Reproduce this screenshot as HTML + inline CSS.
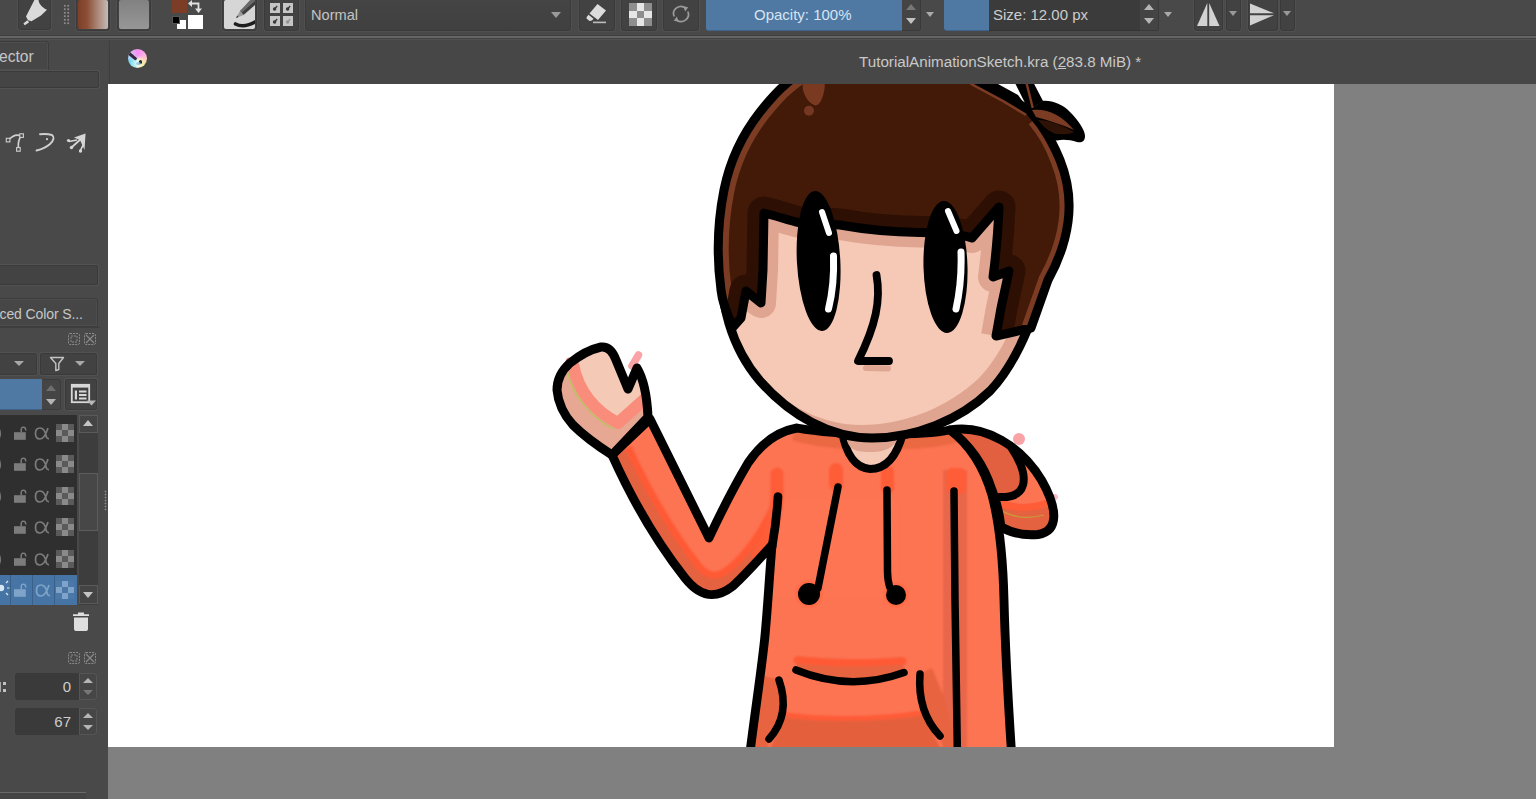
<!DOCTYPE html>
<html>
<head>
<meta charset="utf-8">
<title>Krita</title>
<style>
*{box-sizing:border-box;margin:0;padding:0}
html,body{width:1536px;height:799px;overflow:hidden;background:#808080;font-family:"Liberation Sans",sans-serif;}
body{position:relative}
.abs{position:absolute}
#topbar{left:0;top:0;width:1536px;height:37px;background:#494949}
#topline1{left:0;top:35px;width:1536px;height:1px;background:#3f3f3f}
#topline2{left:0;top:36px;width:1536px;height:2px;background:#646464}
#tabbar{left:0;top:39px;width:1536px;height:45px;background:#474747}
#leftpanel{left:0;top:39px;width:108px;height:760px;background:#494949}
#canvas{left:108px;top:84px;width:1226px;height:663px;background:#fff;overflow:hidden}
.btn{position:absolute;top:-2px;height:32px;background:#424242;border:1px solid #3a3a3a;border-radius:3px;box-shadow:0 0 0 1px #505050}
.txt{position:absolute;white-space:nowrap;color:#cfcfcf;font-size:15px;line-height:18px}
.tri-d{position:absolute;width:0;height:0;border-left:5px solid transparent;border-right:5px solid transparent;border-top:6px solid #b8b8b8}
.tri-u{position:absolute;width:0;height:0;border-left:5px solid transparent;border-right:5px solid transparent;border-bottom:6px solid #b8b8b8}
.field{position:absolute;background:#424242;border:1px solid #3a3a3a;border-radius:2px;box-shadow:0 0 0 1px #525252}
</style>
</head>
<body>
<!-- TOP TOOLBAR -->
<div id="topbar" class="abs">
<!-- brush tool button -->
<div class="btn" style="left:18px;width:33px;top:-3px;height:33px"></div>
<svg class="abs" style="left:22px;top:0" width="28" height="28" viewBox="0 0 28 28">
 <path d="M12.4,0 L16.5,0 C17,4 20,7.5 25,9.8 L19,15.5 L9.5,21.2 L6,20.3 L4,16.5 Z" fill="#dadada"/>
 <path d="M5.3,20.3 L7.2,22.3 L2.8,25.2 L1.4,23.6 Z" fill="#dadada"/>
</svg>
<!-- dotted handle -->
<div class="abs" style="left:63px;top:4px;width:7px;height:21px;background-image:radial-gradient(circle,#8e8e8e 0.9px,transparent 1.25px);background-size:3.5px 3.5px"></div>
<!-- gradient button -->
<div class="btn" style="left:76px;width:34px;top:-3px;height:34px"></div>
<div class="abs" style="left:78px;top:0;width:30px;height:29px;border-radius:2px;background:linear-gradient(90deg,#7d3f28 0%,#8c4e35 30%,#a98271 62%,#c4bab6 100%)"></div>
<!-- pattern button -->
<div class="btn" style="left:117px;width:34px;top:-3px;height:34px"></div>
<div class="abs" style="left:119px;top:0;width:30px;height:29px;border-radius:2px;background:linear-gradient(180deg,#818181,#979797)"></div>
<!-- fg/bg colours -->
<div class="abs" style="left:172px;top:0;width:15px;height:13px;background:#7c3d26"></div>
<div class="abs" style="left:188px;top:15px;width:15px;height:14px;background:#fff"></div>
<div class="abs" style="left:177px;top:20px;width:9px;height:9px;background:#fff"></div>
<div class="abs" style="left:172px;top:16px;width:8px;height:8px;background:#000;border:1px solid #555"></div>
<svg class="abs" style="left:188px;top:0" width="15" height="13" viewBox="0 0 15 13">
 <path d="M3,3.5 H10.5 V10" fill="none" stroke="#e0e0e0" stroke-width="1.8"/>
 <path d="M0,3.5 L4,0 V7 Z M10.5,13 L7,8.5 H14 Z" fill="#e0e0e0"/>
</svg>
<!-- brush preset -->
<div class="btn" style="left:222px;width:35px;top:-3px;height:34px"></div>
<div class="abs" style="left:224px;top:0;width:31px;height:29px;border-radius:2px;background:#d6d6d6;overflow:hidden">
 <svg width="31" height="29" viewBox="0 0 31 29">
  <path d="M31,-2 L16,11 L19.5,15 L31,5 Z" fill="#3e3e3e"/>
  <path d="M28,-2 L31,-2 L31,1 L18,12.5 L16,11 Z" fill="#6a6a6a"/>
  <path d="M16,11 L12,18 L19.5,15 Z" fill="#9a9a9a"/>
  <path d="M13.3,15.6 L12,18 L14.5,17 Z" fill="#333"/>
  <path d="M11.5,24 Q20,28.5 32,21.5" fill="none" stroke="#1e1e1e" stroke-width="3.6" stroke-linecap="round"/>
 </svg>
</div>
<!-- grid button -->
<div class="btn" style="left:264px;width:35px;top:-3px;height:34px"></div>
<svg class="abs" style="left:269px;top:2px" width="26" height="26" viewBox="0 0 26 26">
 <g fill="#c6c6c6"><rect x="1" y="1" width="10" height="10"/><rect x="14" y="1" width="10" height="10"/><rect x="1" y="14" width="10" height="10"/><rect x="14" y="14" width="10" height="10"/></g>
 <g fill="#3a3a3a" stroke="#3a3a3a" stroke-width="1.3"><circle cx="5.6" cy="7" r="1.1"/><path d="M5.6,7 L8.2,4"/><circle cx="18.6" cy="7" r="1.1"/><path d="M18.6,7 L21.2,4"/><circle cx="5.6" cy="20" r="1.1"/><path d="M5.6,20 L8.2,17"/><g opacity=".35"><circle cx="18.6" cy="20" r="1.1"/><path d="M18.6,20 L21.2,17"/></g></g>
</svg>
<!-- blend combobox -->
<div class="btn" style="left:305px;width:266px;top:-3px;height:34px;background:linear-gradient(180deg,#454545,#404040)"></div>
<div class="txt" style="left:311px;top:6px;font-size:14.6px;color:#c4c4c4">Normal</div>
<div class="tri-d" style="left:551px;top:12px;border-top-color:#9a9a9a"></div>
<!-- eraser -->
<div class="btn" style="left:579px;width:36px;top:-3px;height:34px"></div>
<svg class="abs" style="left:585px;top:2px" width="26" height="24" viewBox="0 0 26 24">
 <path d="M12.5,2 L21,8.5 L13,18 L4.5,11.5 Z" fill="#dcdcdc"/>
 <path d="M3.5,12.8 L8.5,16.8 L7,18.6 L4.5,19 L1.5,16.6 L1.7,15 Z" fill="#dcdcdc"/>
 <rect x="8" y="19.6" width="13" height="1.6" fill="#bdbdbd"/>
</svg>
<!-- checker -->
<div class="btn" style="left:621px;width:36px;top:-3px;height:34px"></div>
<svg class="abs" style="left:629px;top:3px" width="23" height="23" viewBox="0 0 3 3" shape-rendering="crispEdges">
 <rect width="3" height="3" fill="#8e8e8e"/>
 <rect x="1" y="0" width="1" height="1" fill="#e6e6e6"/><rect x="0" y="1" width="1" height="1" fill="#e6e6e6"/><rect x="2" y="1" width="1" height="1" fill="#e6e6e6"/><rect x="1" y="2" width="1" height="1" fill="#e6e6e6"/>
</svg>
<!-- reload -->
<div class="btn" style="left:663px;width:36px;top:-3px;height:34px"></div>
<svg class="abs" style="left:671px;top:4px" width="20" height="20" viewBox="0 0 20 20">
 <path d="M3.2,12.5 A7.2,7.2 0 0 1 14.5,4.2" fill="none" stroke="#9b9b9b" stroke-width="1.7"/>
 <path d="M16.8,7.5 A7.2,7.2 0 0 1 5.5,15.8" fill="none" stroke="#9b9b9b" stroke-width="1.7"/>
 <path d="M12.2,2.2 L17.2,3.2 L14.2,7.4 Z" fill="#9b9b9b"/>
 <path d="M7.8,17.8 L2.8,16.8 L5.8,12.6 Z" fill="#9b9b9b"/>
</svg>
<!-- opacity slider -->
<div class="abs" style="left:706px;top:-2px;width:196px;height:33px;background:#4f78a3;border-radius:3px 0 0 3px;border-bottom:1px solid #3f6288"></div>
<div class="txt" style="left:754px;top:6px;color:#d6e4f2">Opacity: 100%</div>
<div class="abs" style="left:902px;top:-2px;width:19px;height:33px;background:#444;border:1px solid #3a3a3a;border-left:none;border-radius:0 3px 3px 0"></div>
<div class="tri-u" style="left:906px;top:4px;border-bottom-color:#777"></div>
<div class="tri-d" style="left:906px;top:18px;border-top-color:#c2c2c2"></div>
<div class="tri-d" style="left:926px;top:12px;border-width:4px 4px 0 4px;border-top-color:#aaa;border-left-width:4px;border-right-width:4px;border-top-width:5px"></div>
<!-- size slider -->
<div class="abs" style="left:944px;top:-2px;width:196px;height:33px;background:#3b3b3b;border-radius:3px 0 0 3px;border-bottom:1px solid #333"></div>
<div class="abs" style="left:944px;top:-2px;width:45px;height:33px;background:#4f78a3;border-radius:3px 0 0 3px;border-bottom:1px solid #3f6288"></div>
<div class="txt" style="left:993px;top:6px;color:#cdcdcd">Size: 12.00 px</div>
<div class="abs" style="left:1140px;top:-2px;width:19px;height:33px;background:#444;border:1px solid #3a3a3a;border-left:none;border-radius:0 3px 3px 0"></div>
<div class="tri-u" style="left:1144px;top:4px;border-bottom-color:#b5b5b5"></div>
<div class="tri-d" style="left:1144px;top:18px;border-top-color:#b5b5b5"></div>
<div class="tri-d" style="left:1164px;top:12px;border-left-width:4px;border-right-width:4px;border-top-width:5px;border-top-color:#aaa"></div>
<!-- mirror H -->
<div class="btn" style="left:1194px;width:29px;top:-3px;height:34px"></div>
<svg class="abs" style="left:1196px;top:2px" width="25" height="25" viewBox="0 0 25 25">
 <path d="M11.3,1 V24 H1 Z" fill="#d2d2d2"/><path d="M13.2,1 V24 H23.5 Z" fill="#d2d2d2"/>
</svg>
<div class="btn" style="left:1226px;width:15px;top:-3px;height:34px"></div>
<div class="tri-d" style="left:1229px;top:11px;border-left-width:4.5px;border-right-width:4.5px;border-top-width:5px;border-top-color:#999"></div>
<!-- mirror V -->
<div class="btn" style="left:1248px;width:30px;top:-3px;height:34px"></div>
<svg class="abs" style="left:1250px;top:2px" width="25" height="25" viewBox="0 0 25 25">
 <path d="M0,1.5 H0 L24,11.2 H0 Z" fill="#d2d2d2"/><path d="M0,13.2 H24 L0,23.5 Z" fill="#d2d2d2"/>
</svg>
<div class="btn" style="left:1280px;width:15px;top:-3px;height:34px"></div>
<div class="tri-d" style="left:1283px;top:11px;border-left-width:4.5px;border-right-width:4.5px;border-top-width:5px;border-top-color:#999"></div>

</div>
<div id="topline1" class="abs"></div>
<div id="topline2" class="abs"></div>
<div class="abs" style="left:0;top:38px;width:1536px;height:1px;background:#424242;z-index:3"></div><div class="abs" style="left:0;top:39px;width:1536px;height:1px;background:#515151;z-index:3"></div>
<!-- TAB BAR -->
<div id="tabbar" class="abs">
<!-- coordinates relative to tabbar top (39px) -->
<div class="abs" style="left:109px;top:2px;width:1px;height:43px;background:#3e3e3e"></div>
<!-- krita icon -->
<div class="abs" style="left:127.5px;top:10.3px;width:19px;height:19px;border-radius:50%;overflow:hidden;background:radial-gradient(circle at 50% 72%,rgba(255,255,255,0.75) 0,rgba(255,255,255,0) 45%),conic-gradient(from 0deg at 50% 50%,#fb8cf6 0deg,#fba6ea 50deg,#fbd0c0 95deg,#f4e68e 135deg,#e6f2c4 175deg,#86e2ee 205deg,#72dcf0 245deg,#b4d0f6 285deg,#e9a4f4 335deg,#fb8cf6 360deg)">
 <div class="abs" style="left:0.5px;top:1.3px;width:11px;height:3.2px;background:#3a2540;border-radius:1.5px;transform:rotate(40deg);transform-origin:0 50%"></div>
 <div class="abs" style="left:11.3px;top:11.2px;width:3.6px;height:3.8px;background:#1d2a33;border-radius:50%"></div>
 <div class="abs" style="left:8.5px;top:12.5px;width:5px;height:3px;background:#7fb4e0;border-radius:50%;opacity:.7"></div>
</div>
<div class="txt" style="left:859px;top:14px;font-size:15.2px;color:#c9c9c9" id="title">TutorialAnimationSketch.kra (<span style="text-decoration:underline">2</span>83.8 MiB) *</div>

</div>
<!-- LEFT PANEL -->
<div id="leftpanel" class="abs">
<!-- coordinates relative to left panel top (39px) : y_rel = y_abs-39 -->
<!-- "ector" tab -->
<div class="abs" style="left:-4px;top:2px;width:53px;height:30px;background:#464646;border:1px solid #3c3c3c;border-radius:3px 3px 0 0;box-shadow:inset 0 0 0 1px #4e4e4e"></div>
<div class="txt" style="left:-1px;top:8.5px;font-size:15.6px;color:#c6c6c6">ector</div>
<div class="field" style="left:-4px;top:32px;width:103px;height:17px;background:#454545"></div>
<!-- tool icons y=142 -> rel 103 -->
<svg class="abs" style="left:4px;top:92px" width="24" height="24" viewBox="0 0 24 24">
 <path d="M4.5,9 Q11,2 17,5 M17,5 Q13.5,10 14.5,18" fill="none" stroke="#cfcfcf" stroke-width="1.7"/>
 <rect x="2.3" y="7.3" width="3.6" height="3.6" fill="#494949" stroke="#cfcfcf" stroke-width="1.1"/>
 <rect x="15.8" y="2.8" width="3.6" height="3.6" fill="#494949" stroke="#cfcfcf" stroke-width="1.1"/>
 <rect x="12.6" y="16.6" width="3.6" height="3.6" fill="#494949" stroke="#cfcfcf" stroke-width="1.1"/>
</svg>
<svg class="abs" style="left:34px;top:92px" width="24" height="24" viewBox="0 0 24 24">
 <path d="M6,3.2 Q13,2.5 18,4 Q22,7 16,13 Q11,17.5 2.5,19.5" fill="none" stroke="#cfcfcf" stroke-width="1.9" stroke-linecap="round"/>
 <circle cx="13" cy="8.2" r="1.1" fill="#cfcfcf"/>
</svg>
<svg class="abs" style="left:65px;top:92px" width="24" height="24" viewBox="0 0 24 24">
 <path d="M20.5,2.5 L9,6.5 L17,10 Z" fill="#d6d6d6"/>
 <path d="M20.5,2.5 L19.5,19 L15,9 Z" fill="#d6d6d6"/>
 <path d="M17,7 L6.5,16.5 M12,9 L4,10.5 M18.5,13 L15,20.5" fill="none" stroke="#d6d6d6" stroke-width="1.7"/>
 <circle cx="3.5" cy="9.5" r="1.6" fill="#d6d6d6"/><circle cx="6.5" cy="16.5" r="1.7" fill="#d6d6d6"/><circle cx="15.5" cy="20" r="1.7" fill="#d6d6d6"/>
</svg>
<!-- bar y 264-285 -->
<div class="field" style="left:-4px;top:226px;width:102px;height:20px;background:#434343"></div>
<!-- "ced Color S..." tab y 298-326 -->
<div class="abs" style="left:-4px;top:259px;width:102px;height:29px;background:#464646;border:1px solid #3c3c3c;border-radius:3px 3px 0 0;box-shadow:inset 0 0 0 1px #4d4d4d"></div>
<div class="txt" style="left:-0.5px;top:266px;font-size:14px;color:#c6c6c6;letter-spacing:-0.1px">ced Color S...</div>
<div class="abs" style="left:0;top:288px;width:100px;height:1px;background:#3e3e3e"></div>
<!-- float/close icons at y=339 -->
<svg class="abs" style="left:67px;top:293px" width="32" height="14" viewBox="0 0 32 14">
 <g fill="none" stroke="#8a8a8a" stroke-width="1" stroke-dasharray="2 1">
  <rect x="1.5" y="1.5" width="11" height="11" rx="1.5"/><rect x="4" y="4" width="6" height="6"/>
  <rect x="17.5" y="1.5" width="11" height="11" rx="1.5"/>
 </g>
 <path d="M19,3 L27,11 M27,3 L19,11" stroke="#8a8a8a" stroke-width="1.1" fill="none"/>
</svg>
<!-- dropdown row y 353-375 -->
<div class="field" style="left:-4px;top:314px;width:41px;height:22px"></div>
<div class="tri-d" style="left:14px;top:322px;border-top-color:#a8a8a8;border-top-width:5px"></div>
<div class="field" style="left:40px;top:314px;width:57px;height:22px"></div>
<svg class="abs" style="left:49px;top:317px" width="16" height="16" viewBox="0 0 16 16">
 <path d="M1.5,1.5 H14.5 L9.8,7.5 V13.5 L6.8,14.5 V7.5 Z" fill="none" stroke="#c4c4c4" stroke-width="1.4" stroke-linejoin="round"/>
</svg>
<div class="tri-d" style="left:75px;top:322px;border-top-color:#a8a8a8;border-top-width:5px"></div>
<!-- blue slider y 379-410 -->
<div class="abs" style="left:0;top:340px;width:42px;height:31px;background:#4f78a3;border-bottom:1px solid #3f6288"></div>
<div class="abs" style="left:42px;top:340px;width:19px;height:31px;background:#454545;border:1px solid #3b3b3b;border-left:none;border-radius:0 3px 3px 0"></div>
<div class="tri-u" style="left:46px;top:346px;border-bottom-color:#6e6e6e"></div>
<div class="tri-d" style="left:46px;top:360px;border-top-color:#b5b5b5"></div>
<div class="field" style="left:65px;top:340px;width:32px;height:31px"></div>
<svg class="abs" style="left:70px;top:344px" width="27" height="24" viewBox="0 0 27 24">
 <rect x="1.8" y="1.8" width="17.4" height="17.4" fill="none" stroke="#d8d8d8" stroke-width="1.8"/>
 <rect x="1" y="1" width="19" height="3.6" fill="#d8d8d8"/>
 <rect x="4.8" y="7.5" width="2.2" height="9" fill="#d8d8d8"/>
 <rect x="9" y="7.5" width="7.5" height="2" fill="#d8d8d8"/><rect x="9" y="11" width="7.5" height="2" fill="#d8d8d8"/><rect x="9" y="14.5" width="7.5" height="2" fill="#d8d8d8"/>
 <path d="M17,17.5 H26 L21.5,22.5 Z" fill="#b8b8b8"/>
</svg>
<!-- layer list y 415-605 : rel 376-566 -->
<div class="abs" style="left:0;top:376px;width:77px;height:190px;background:#2f2f2f"></div>
<div class="abs" style="left:0;top:536px;width:77px;height:30px;background:#4674a4"></div>
<div class="abs" style="left:10px;top:536px;width:1px;height:30px;background:#3a5f88"></div>
<div class="abs" style="left:32px;top:536px;width:1px;height:30px;background:#3a5f88"></div>
<div class="abs" style="left:54px;top:536px;width:1px;height:30px;background:#3a5f88"></div>
<svg class="abs" style="left:0;top:376px" width="77" height="190" viewBox="0 415 77 190">
 <defs>
  <g id="lock"><path d="M-6,-1.8 H5.8 V5.8 H-6 Z"/><path d="M1.2,-1.8 V-4.6 Q1.6,-7.6 4.6,-6.6 Q5.8,-5.6 5.8,-3.6" fill="none" stroke-width="1.5" stroke="currentColor"/></g>
  <g id="alpha"><path d="M7,-5 Q3.5,6 -1,6 Q-5.5,6 -5.5,0.5 Q-5.5,-5 -1,-5 Q3.5,-5 5,2.5 Q5.6,6 8,5.5" fill="none" stroke="currentColor" stroke-width="1.7"/></g>
  <g id="chk" shape-rendering="crispEdges"><rect x="-9" y="-9" width="18" height="18" fill="#5a5a5a"/><rect x="-3" y="-9" width="6" height="6" fill="#8a8a8a"/><rect x="-9" y="-3" width="6" height="6" fill="#8a8a8a"/><rect x="3" y="-3" width="6" height="6" fill="#8a8a8a"/><rect x="-3" y="3" width="6" height="6" fill="#8a8a8a"/></g>
  <g id="chkb" shape-rendering="crispEdges"><rect x="-9" y="-9" width="18" height="18" fill="#4b78a6"/><rect x="-3" y="-9" width="6" height="6" fill="#7fa3c9"/><rect x="-9" y="-3" width="6" height="6" fill="#7fa3c9"/><rect x="3" y="-3" width="6" height="6" fill="#7fa3c9"/><rect x="-3" y="3" width="6" height="6" fill="#7fa3c9"/></g>
  <g id="eye"><path d="M-9,-8 Q0,-8 0,1 Q0,8 -9,8" fill="none" stroke="currentColor" stroke-width="2"/></g>
 </defs>
 <g color="#7c7c7c" fill="#7c7c7c">
  <use href="#eye" x="0" y="433"/><use href="#lock" x="20" y="434"/><use href="#alpha" x="41" y="433"/><use href="#chk" x="65" y="433"/>
  <use href="#eye" x="0" y="464"/><use href="#lock" x="20" y="465"/><use href="#alpha" x="41" y="464"/><use href="#chk" x="65" y="464"/>
  <use href="#eye" x="0" y="496"/><use href="#lock" x="20" y="497"/><use href="#alpha" x="41" y="496"/><use href="#chk" x="65" y="496"/>
  <use href="#lock" x="20" y="528"/><use href="#alpha" x="41" y="527"/><use href="#chk" x="65" y="527"/>
  <use href="#eye" x="0" y="559"/><use href="#lock" x="20" y="560"/><use href="#alpha" x="41" y="559"/><use href="#chk" x="65" y="559"/>
 </g>
 <g color="#7fa3c9" fill="#7fa3c9">
  <use href="#lock" x="20" y="591"/><use href="#alpha" x="42" y="590"/><use href="#chkb" x="65" y="590"/>
 </g>
 <g stroke="#d8e6f4" stroke-width="1.2" fill="#d8e6f4"><circle cx="1" cy="588" r="3.2" stroke="none"/><path d="M6,583 L8,581 M7,588 H9.5 M6,593 L8,595"/></g>
</svg>
<!-- scrollbar x 79-97 -->
<div class="abs" style="left:79px;top:376px;width:19px;height:190px;background:#3d3d3d"></div>
<div class="abs" style="left:79px;top:376px;width:19px;height:18px;background:#444;border:1px solid #5a5a5a"></div>
<div class="tri-u" style="left:83px;top:381px;border-bottom-color:#c4c4c4"></div>
<div class="abs" style="left:79px;top:434px;width:19px;height:58px;background:#474747;border:1px solid #5c5c5c"></div>
<div class="abs" style="left:79px;top:546px;width:19px;height:19px;background:#444;border:1px solid #5a5a5a"></div>
<div class="tri-d" style="left:83px;top:553px;border-top-color:#c4c4c4"></div>
<!-- splitter dots -->
<div class="abs" style="left:104px;top:451px;width:3px;height:21px;background-image:radial-gradient(circle,#8a8a9a 0.8px,transparent 1.1px);background-size:3px 3px"></div>
<!-- trash y=622 -> rel 583 -->
<svg class="abs" style="left:72px;top:573px" width="18" height="20" viewBox="0 0 18 20">
 <path d="M2,5.5 H16 V17 Q16,19 14,19 H4 Q2,19 2,17 Z" fill="#dedede"/>
 <path d="M1,2.2 H17 V4 H1 Z M6,0.6 H12 V2.5 H6 Z" fill="#dedede"/>
</svg>
<!-- float/close icons at y=658 -->
<svg class="abs" style="left:67px;top:612px" width="32" height="14" viewBox="0 0 32 14">
 <g fill="none" stroke="#8a8a8a" stroke-width="1" stroke-dasharray="2 1">
  <rect x="1.5" y="1.5" width="11" height="11" rx="1.5"/><rect x="4" y="4" width="6" height="6"/>
  <rect x="17.5" y="1.5" width="11" height="11" rx="1.5"/>
 </g>
 <path d="M19,3 L27,11 M27,3 L19,11" stroke="#8a8a8a" stroke-width="1.1" fill="none"/>
</svg>
<!-- spin boxes -->
<div class="abs" style="left:3px;top:643px;width:2.5px;height:2.5px;background:#c2c2c2"></div><div class="abs" style="left:3px;top:650px;width:2.5px;height:2.5px;background:#c2c2c2"></div><div class="abs" style="left:0;top:643px;width:1px;height:10px;background:#aaa"></div>
<div class="abs" style="left:15px;top:634px;width:64px;height:27px;background:#3a3a3a;border-radius:3px 0 0 3px"></div>
<div class="abs" style="left:79px;top:634px;width:18px;height:27px;background:#464646;border:1px solid #555;border-radius:0 3px 3px 0"></div>
<div class="txt" style="left:15px;top:639px;width:56px;text-align:right;font-size:15px;color:#cdcdcd">0</div>
<div class="tri-u" style="left:83px;top:639px;border-bottom-color:#b5b5b5;border-bottom-width:5px"></div>
<div class="tri-d" style="left:83px;top:651px;border-top-color:#777;border-top-width:5px"></div>
<div class="abs" style="left:15px;top:669px;width:64px;height:27px;background:#3a3a3a;border-radius:3px 0 0 3px"></div>
<div class="abs" style="left:79px;top:669px;width:18px;height:27px;background:#464646;border:1px solid #555;border-radius:0 3px 3px 0"></div>
<div class="txt" style="left:15px;top:674px;width:56px;text-align:right;font-size:15px;color:#cdcdcd">67</div>
<div class="tri-u" style="left:83px;top:674px;border-bottom-color:#b5b5b5;border-bottom-width:5px"></div>
<div class="tri-d" style="left:83px;top:686px;border-top-color:#b5b5b5;border-top-width:5px"></div>
<!-- bottom line -->
<div class="abs" style="left:0;top:753px;width:86px;height:1px;background:#6a6a6a"></div>
<div class="abs" style="left:0;top:754px;width:86px;height:6px;background:#444"></div>

</div>
<!-- CANVAS -->
<div id="canvas" class="abs">
<!--CHAR-START--><svg class="abs" style="left:-10px;top:-10px;filter:blur(0.45px)" width="1246" height="683" viewBox="98 74 1246 683">
<defs>
 <filter id="b1" x="-5%" y="-5%" width="110%" height="110%"><feGaussianBlur stdDeviation="1.3"/></filter>
 <path id="facep" d="M745,200 L722,268 C720,300 730,346 760,381 C790,415 830,438 872,438 C915,438 960,420 990,391 C1012,368 1030,330 1044,282 L1035,200 Z"/>
 <clipPath id="faceclip"><use href="#facep"/></clipPath>
 <path id="hairp" d="M733,327 C726,312 722,300 721,290 C717,260 717,225 724,190 C730,160 742,135 760,112 C768,102 776,92 786,84 C815,58 860,46 900,46 C940,46 962,71 976,80 L1004,95 L1029,110 L1041,125 C1049,136 1055,148 1060,160 C1068,180 1071,200 1068,222 C1065,245 1058,262 1048,280 L1031,328 L996,336 L1001,308 L1009,271 L993,277 C996,255 998,230 999,207 L972,238 C962,234 940,233 920,232.5 C890,232 862,229 840,225 C825,224 810,224 800,223 C788,220 776,216 764,213 L763,270 L761,303 L746,291 L741,318 Z"/>
 <clipPath id="hairclip"><use href="#hairp"/></clipPath>
 <path id="bangsp" d="M996,336 L1001,308 L1009,271 L993,277 C996,255 998,230 999,207 L972,238 C962,234 940,233 920,232.5 C890,232 862,229 840,225 C825,224 810,224 800,223 C788,220 776,216 764,213 L763,270 L761,303 L746,291 L741,318 L733,327"/>
 <path id="bodyp" d="M797,428 C775,432 760,445 748,463 C735,485 722,510 709,538 L650,419 L612,455 C630,495 655,540 685,578 C700,597 715,600 733,586 C748,572 760,558 772,545 C769,580 767,620 764,645 C760,680 756,705 749,760 L1012,760 C1008,700 1005,640 1004,600 C1003,560 1000,525 992,495 C984,468 970,445 950,430 C920,436 840,436 797,428 Z"/>
 <clipPath id="bodyclip"><use href="#bodyp"/></clipPath>
 <path id="rarmp" d="M950,430 C985,424 1021,446 1041.5,480 C1058,509 1059,531 1038,534.5 C1022,536 1010,532 1001,527 C999,510 996,500 992,490 C984,465 970,445 950,430 Z"/>
 <clipPath id="rarmclip"><use href="#rarmp"/></clipPath>
 <path id="handp" d="M612,455 C598,446 585,437 573,425 C564,415 558,402 557,390 C557,380 561,371 570,363 C580,355 592,349 601,347 C609,346 613,352 616,360 L628,389 L637,368 C643,378 647,395 648,417 Z"/>
 <clipPath id="handclip"><use href="#handp"/></clipPath>
</defs>

<!-- stray pink dots -->
<circle cx="1019" cy="439" r="6" fill="#f9a3a6"/>
<circle cx="1055" cy="497" r="3" fill="#f9bcc6"/>
<path d="M638.5,355 L632,366" stroke="#f9a3a6" stroke-width="7.5" stroke-linecap="round"/>
<circle cx="569" cy="361" r="3.5" fill="#f9a3a6"/>

<!-- right arm (behind body) -->
<use href="#rarmp" fill="#fd7453"/>
<g clip-path="url(#rarmclip)">
 <path d="M950,424 L1010,444 C1019,459 1026,474 1023,485 C1020,496 1008,497.5 990,497 Z" fill="#e2603f"/>
 <path d="M995,500 C1015,512 1040,512 1060,500 L1060,545 L995,545 Z" fill="#e4623f"/>
 <path d="M1000,503 C1015,509 1035,509 1052,501" fill="none" stroke="#ff5c38" stroke-width="7"/>
 <path d="M1002,511 C1015,518 1030,519 1044,515" fill="none" stroke="#c99a3a" stroke-width="1.2"/>
</g>
<use href="#rarmp" fill="none" stroke="#000" stroke-width="8.9" stroke-linejoin="round"/>
<path d="M1011,447 C1019,459 1026,474 1023,485 C1020,496 1008,497.5 999,497" fill="none" stroke="#000" stroke-width="8" stroke-linecap="round"/>

<!-- body -->
<use href="#bodyp" fill="#fd7453"/>
<g clip-path="url(#bodyclip)"><g filter="url(#b1)">
 <!-- arm shading -->
 <path d="M612,455 C630,495 655,540 685,578 C700,597 715,600 733,586 C748,572 760,558 770,546" fill="none" stroke="#e4623f" stroke-width="34"/>
 <path d="M628,447 C648,490 672,532 698,565 C708,578 718,578 730,568 C745,555 760,535 772,510" fill="none" stroke="#ff5a36" stroke-width="7"/>
 <path d="M779,498 L773,548 L768,600 L900,600 L900,498 Z" fill="#fd7453"/>
 <!-- under-chin shadow -->
 <path d="M795,432 C830,444 920,444 955,434" fill="none" stroke="#ea6743" stroke-width="17"/>
 <!-- right seam band -->
 <rect x="943" y="470" width="24" height="300" fill="#e8664a"/>
 <rect x="946" y="468" width="20" height="26" rx="6" fill="#ff5c38"/>
 <!-- red blotches -->
 <path d="M777,474 L777,498 C775,520 768,540 758,555" fill="none" stroke="#ff5c38" stroke-width="13" stroke-linecap="round"/>
 <rect x="829" y="463" width="14" height="28" rx="7" fill="#ff5c38"/>
 <rect x="881" y="466" width="13" height="28" rx="6" fill="#ff5c38"/>
 <circle cx="809" cy="594" r="13.5" fill="#ff6a45"/>
 <circle cx="896" cy="595" r="12.5" fill="#ff6a45"/>
 <!-- pocket shading -->
 <path d="M796,670 Q850,692 904,672 L903,657 Q850,662 797,656 Z" fill="#e8633f"/>
 <path d="M797,660 Q850,665 903,661" fill="none" stroke="#ff5a36" stroke-width="7" stroke-linecap="round"/>
 <path d="M779,680 C786,700 786,720 769,739 L766,760 L745,760 L764,676 Z" fill="#e8633f"/>
 <path d="M920,674 C918,700 925,720 940,736 L946,760 L960,760 L945,700 L932,668 Z" fill="#e8633f"/>
 <path d="M785,714 Q850,722 923,712 L946,760 L765,760 Z" fill="#e4603e"/>
 <path d="M786,715 Q850,723 922,713" fill="none" stroke="#ff5c38" stroke-width="5"/>
 <!-- sleeve cuff shading -->
</g></g>
<use href="#bodyp" fill="none" stroke="#000" stroke-width="8.9" stroke-linejoin="round"/>
<!-- body inner lines -->
<path d="M778,496.5 C777,515 775,530 772,547" fill="none" stroke="#000" stroke-width="8.7" stroke-linecap="round"/>
<path d="M954,491 L955,600 L957.5,760" fill="none" stroke="#000" stroke-width="7.5" stroke-linecap="round"/>
<path d="M838,487 L818,588" fill="none" stroke="#000" stroke-width="7.5" stroke-linecap="round"/>
<circle cx="809" cy="594" r="11" fill="#000"/>
<path d="M887,490 L887.5,572 Q888,590 895,595" fill="none" stroke="#000" stroke-width="7.5" stroke-linecap="round"/>
<circle cx="896" cy="595" r="10" fill="#000"/>
<path d="M796,670 Q850,692 904,672.5" fill="none" stroke="#000" stroke-width="7.5" stroke-linecap="round"/>
<path d="M779,680 C786,700 786,720 769,739" fill="none" stroke="#000" stroke-width="7.5" stroke-linecap="round"/>
<path d="M920,674 C918,700 925,720 940,736" fill="none" stroke="#000" stroke-width="7.5" stroke-linecap="round"/>

<!-- hand -->
<use href="#handp" fill="#f4c9b5"/>
<g clip-path="url(#handclip)">
 <path d="M573,364 C578,392 596,412 618,423 L646,398 L660,470 L540,470 L540,364 Z" fill="#e6a892"/>
 <path d="M573,364 C578,392 596,412 618,423 L646,398" fill="none" stroke="#f98c7a" stroke-width="12" stroke-linejoin="round"/>
 <path d="M567.5,372 C573,397 591,417 614,429" fill="none" stroke="#b7c35a" stroke-width="1.3"/>
</g>
<use href="#handp" fill="none" stroke="#000" stroke-width="9" stroke-linejoin="round"/>

<!-- neck -->
<path d="M842,431 C846,455 856,468 870,469 C886,469 897,456 903,433 Z" fill="#f4c9b5" stroke="#000" stroke-width="8" stroke-linejoin="round"/>
<path d="M846,436 C848,448 852,452 870,452 C888,452 895,446 899,436 Z" fill="#dfa590"/>

<!-- face -->
<use href="#facep" fill="#dfa590"/>
<g clip-path="url(#faceclip)">
 <use href="#facep" fill="#f5c9b5" transform="translate(-11,-13)"/>
 <path d="M996,336 L1001,308 L1009,271 L993,277 C996,255 998,230 999,207 L972,238 C962,234 940,233 920,232.5 C890,232 862,229 840,225 C825,224 810,224 800,223 C788,220 776,216 764,213 L763,270 L761,303 L748,294" fill="none" stroke="#dfa590" stroke-width="30" stroke-linejoin="round"/>
 <path d="M866,368 L888,368.5" stroke="#e0a694" stroke-width="6" stroke-linecap="round"/>
</g>
<use href="#facep" fill="none" stroke="#000" stroke-width="9"/>

<!-- hair -->
<use href="#hairp" fill="#431a08"/>
<g clip-path="url(#hairclip)">
 <path d="M733,327 C726,312 722,300 721,290 C717,260 717,225 724,190 C730,160 742,135 760,112 C768,102 776,92 786,84 C800,72 815,64 830,58" fill="none" stroke="#7b3c23" stroke-width="21"/>
 <path d="M1036,118 C1048,132 1055,146 1060,160 C1068,180 1071,200 1068,222 C1065,245 1058,262 1048,280 L1031,328" fill="none" stroke="#7b3c23" stroke-width="19"/>
 <path d="M830,58 C860,46 880,46 900,46 C940,46 962,71 976,80 L1004,95 L1029,110" fill="none" stroke="#7b3c23" stroke-width="14"/>
 <use href="#bangsp" fill="none" stroke="#2d0f03" stroke-width="33" stroke-linejoin="round"/>
 <path d="M802.5,80 L803,90 C805,98 810,104 815.5,105.5 C820,105 823,98 824.5,89 L825,80 Z" fill="#7a3a22"/>
 <circle cx="809" cy="110.8" r="5" fill="#743822"/>
</g>
<use href="#hairp" fill="none" stroke="#000" stroke-width="9" stroke-linejoin="round"/>
<!-- spike + tuft -->
<path d="M962,70 L998,84 L1018,95 L1030,111 L1002,98 L974,83 Z" fill="#000"/>
<path d="M1011.5,76 L1030,76 L1043,101 L1029,111 Z" fill="#000"/>
<path d="M1024,78 L1026.5,78 L1034,108 L1031.5,108 Z" fill="#7b3c23"/>
<path d="M1029,111 L1042,101 C1052,100 1062,104 1070,112 C1078,120 1085,130 1085,136 C1085,142 1081,143 1077,142 C1070,139.5 1062,139 1057,140.5 L1046,139 L1036,122 Z" fill="#000"/>
<path d="M1038,120 C1050,120 1064,126 1074,132 C1070,135 1062,134 1056,134 C1050,132 1044,128 1038,120 Z" fill="#2e1206"/>
<path d="M1032,110 C1046,108 1061,114 1074,130 C1060,124 1048,120 1036,117 Z" fill="#7b3c23"/>
<!-- eyes -->
<ellipse cx="818.6" cy="261" rx="21.7" ry="70" fill="#000" transform="rotate(-3 818.6 261)"/>
<ellipse cx="945.5" cy="267" rx="22" ry="66" fill="#000" transform="rotate(-1.5 945.5 267)"/>
<path d="M822,212 L829,233" stroke="#fff" stroke-width="6" stroke-linecap="round"/>
<path d="M833.5,256 Q834.5,285 828.5,309" fill="none" stroke="#fff" stroke-width="7" stroke-linecap="round"/>
<path d="M948,211 L956.5,231" stroke="#fff" stroke-width="6" stroke-linecap="round"/>
<path d="M961,252 Q962,282 956,309" fill="none" stroke="#fff" stroke-width="7" stroke-linecap="round"/>
<!-- nose -->
<path d="M876.5,275 C881,300 876,325 858,361 L889,361" fill="none" stroke="#000" stroke-width="7.8" stroke-linecap="round" stroke-linejoin="round"/>
</svg>
<!--CHAR-END-->
</div>
</body>
</html>
